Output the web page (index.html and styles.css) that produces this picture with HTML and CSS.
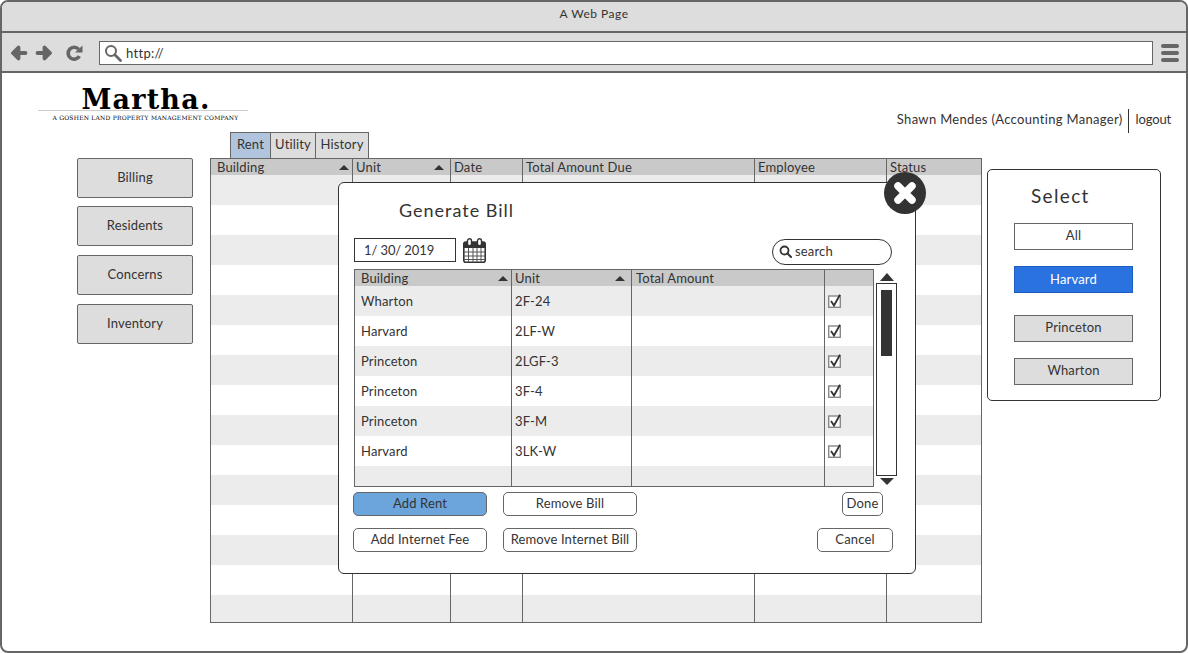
FILE: index.html
```html
<!DOCTYPE html>
<html lang="en">
<head>
<meta charset="utf-8">
<title>A Web Page</title>
<link rel="stylesheet" href="styles.css">
</head>
<body>
<div class="window">
  <div class="titlebar">A Web Page</div>
  <div class="toolbar">
    <svg class="nav-icon" width="18" height="16" viewBox="0 0 18 16"><path d="M8.500 2.500 3 8l5.500 5.500zM4 8H15.500" fill="#666" stroke="#666" stroke-width="3.800" stroke-linecap="round" stroke-linejoin="round"/></svg>
    <svg class="nav-icon" width="18" height="16" viewBox="0 0 18 16"><path d="M9.500 2.500 15 8l-5.500 5.500zM14 8H2.500" fill="#666" stroke="#666" stroke-width="3.800" stroke-linecap="round" stroke-linejoin="round"/></svg>
    <svg class="nav-icon nav-reload" width="17" height="17" viewBox="0 0 17 17"><path d="M13.400 11.200A6 6 0 1 1 12.600 4.200" fill="none" stroke="#666" stroke-width="3.600"/><path d="M9 7.500 16.500 7.500 16.500 0.500Z" fill="#666"/></svg>
    <div class="urlbar">
      <svg width="18" height="18" viewBox="0 0 18 18"><circle cx="7" cy="7" r="5" fill="none" stroke="#666" stroke-width="2"/><path d="M10.800 10.800 16.500 16.500" stroke="#666" stroke-width="2.800" stroke-linecap="round"/></svg>
      <span>http://</span>
    </div>
    <div class="hamburger"><i></i><i></i><i></i></div>
  </div>

  <div class="header">
    <div class="logo">
      <div class="logo-name">Martha.</div>
      <div class="logo-tag">A GOSHEN LAND PROPERTY MANAGEMENT COMPANY</div>
    </div>
    <div class="user">
      <span class="user-name">Shawn Mendes (Accounting Manager)</span>
      <span class="logout">logout</span>
    </div>
  </div>

  <div class="main">
    <nav class="sidebar">
      <div class="nav-btn">Billing</div>
      <div class="nav-btn nav-first">Residents</div>
      <div class="nav-btn">Concerns</div>
      <div class="nav-btn">Inventory</div>
    </nav>

    <div class="center">
      <div class="tabs">
        <div class="tab tab-active">Rent</div>
        <div class="tab tab-utility">Utility</div>
        <div class="tab tab-history">History</div>
      </div>
      <div class="grid-wrap">
        <table class="grid outer">
          <colgroup><col class="c141"><col class="c98"><col class="c72"><col class="c232"><col class="c132"><col></colgroup>
          <thead><tr>
            <th><div class="th-in">Building<i class="sort"></i></div></th>
            <th><div class="th-in th-unit">Unit<i class="sort"></i></div></th>
            <th>Date</th><th>Total Amount Due</th><th>Employee</th><th>Status</th>
          </tr></thead>
          <tbody>
            <tr><td></td><td></td><td></td><td></td><td></td><td></td></tr>
            <tr><td></td><td></td><td></td><td></td><td></td><td></td></tr>
            <tr><td></td><td></td><td></td><td></td><td></td><td></td></tr>
            <tr><td></td><td></td><td></td><td></td><td></td><td></td></tr>
            <tr><td></td><td></td><td></td><td></td><td></td><td></td></tr>
            <tr><td></td><td></td><td></td><td></td><td></td><td></td></tr>
            <tr><td></td><td></td><td></td><td></td><td></td><td></td></tr>
            <tr><td></td><td></td><td></td><td></td><td></td><td></td></tr>
            <tr><td></td><td></td><td></td><td></td><td></td><td></td></tr>
            <tr><td></td><td></td><td></td><td></td><td></td><td></td></tr>
            <tr><td></td><td></td><td></td><td></td><td></td><td></td></tr>
            <tr><td></td><td></td><td></td><td></td><td></td><td></td></tr>
            <tr><td></td><td></td><td></td><td></td><td></td><td></td></tr>
            <tr><td></td><td></td><td></td><td></td><td></td><td></td></tr>
            <tr class="row-last"><td></td><td></td><td></td><td></td><td></td><td></td></tr>
          </tbody>
        </table>
      </div>
    </div>

    <aside class="panel">
      <div class="panel-title">Select</div>
      <div class="pick pick-white">All</div>
      <div class="pick pick-blue">Harvard</div>
      <div class="pick pick-gray pick-gap">Princeton</div>
      <div class="pick pick-gray">Wharton</div>
    </aside>
  </div>

  <div class="modal">
    <div class="modal-title">Generate Bill</div>
    <div class="modal-filter">
      <div class="date-box">1/ 30/ 2019</div>
      <svg class="cal" width="23" height="25" viewBox="0 0 23 25">
        <rect x="0.800" y="4" width="21.400" height="20.200" rx="2" fill="#fff" stroke="#333" stroke-width="1.600"/>
        <path d="M1 4h21v6H1z" fill="#333"/>
        <path d="M1 14h21M1 18h21M1 21.500h21M5.500 10v14M10 10v14M14 10v14M18 10v14" stroke="#555" stroke-width="1" fill="none"/>
        <rect x="4.500" y="0.800" width="4" height="7" rx="2" fill="#fff" stroke="#333" stroke-width="1.400"/>
        <rect x="14.500" y="0.800" width="4" height="7" rx="2" fill="#fff" stroke="#333" stroke-width="1.400"/>
      </svg>
      <div class="search">
        <svg width="13" height="13" viewBox="0 0 13 13"><circle cx="5.500" cy="5.500" r="4" fill="none" stroke="#333" stroke-width="1.800"/><path d="M8.500 8.500 12 12" stroke="#333" stroke-width="2" stroke-linecap="round"/></svg>
        <span>search</span>
      </div>
    </div>
    <div class="modal-list">
      <div class="grid-wrap inner-wrap">
        <table class="grid inner">
          <colgroup><col class="c156"><col class="c120"><col class="c193"><col></colgroup>
          <thead><tr>
            <th><div class="th-in">Building<i class="sort"></i></div></th>
            <th><div class="th-in th-unit">Unit<i class="sort"></i></div></th>
            <th class="th-total">Total Amount</th><th></th>
          </tr></thead>
          <tbody>
            <tr><td class="first">Wharton</td><td>2F-24</td><td></td><td class="chk"><svg class="check" width="14" height="14" viewBox="0 0 14 14"><use href="#tick"/></svg></td></tr>
            <tr><td class="first">Harvard</td><td>2LF-W</td><td></td><td class="chk"><svg class="check" width="14" height="14" viewBox="0 0 14 14"><use href="#tick"/></svg></td></tr>
            <tr><td class="first">Princeton</td><td>2LGF-3</td><td></td><td class="chk"><svg class="check" width="14" height="14" viewBox="0 0 14 14"><use href="#tick"/></svg></td></tr>
            <tr><td class="first">Princeton</td><td>3F-4</td><td></td><td class="chk"><svg class="check" width="14" height="14" viewBox="0 0 14 14"><use href="#tick"/></svg></td></tr>
            <tr><td class="first">Princeton</td><td>3F-M</td><td></td><td class="chk"><svg class="check" width="14" height="14" viewBox="0 0 14 14"><use href="#tick"/></svg></td></tr>
            <tr><td class="first">Harvard</td><td>3LK-W</td><td></td><td class="chk"><svg class="check" width="14" height="14" viewBox="0 0 14 14"><use href="#tick"/></svg></td></tr>
            <tr class="row-tail"><td></td><td></td><td></td><td></td></tr>
          </tbody>
        </table>
      </div>
      <div class="scroll">
        <i class="arrow-up"></i>
        <div class="scroll-track"><div class="scroll-thumb"></div></div>
        <i class="arrow-down"></i>
      </div>
    </div>
    <div class="btn-row">
      <div class="btn btn-blue">Add Rent</div>
      <div class="btn">Remove Bill</div>
      <div class="btn btn-done">Done</div>
    </div>
    <div class="btn-row btn-row-2">
      <div class="btn">Add Internet Fee</div>
      <div class="btn">Remove Internet Bill</div>
      <div class="btn btn-cancel">Cancel</div>
    </div>
  </div>

  <svg class="close" width="42" height="42" viewBox="0 0 42 42">
    <circle cx="21" cy="21" r="21" fill="#333"/>
    <path d="M14 14 28 28M28 14 14 28" stroke="#fff" stroke-width="7.500" stroke-linecap="round"/>
  </svg>

  <svg class="defs" width="0" height="0">
    <defs><g id="tick">
      <rect x="0.700" y="2" width="11.600" height="11.300" fill="#fff" stroke="#888" stroke-width="1.400"/>
      <path d="M3 7 6 11.500 12 0.800" fill="none" stroke="#333" stroke-width="1.800"/>
    </g></defs>
  </svg>
</div>
</body>
</html>
```
FILE: styles.css
```css
* { box-sizing: border-box; }
html, body { margin: 0; padding: 0; }
body {
  width: 1188px;
  height: 653px;
  overflow: hidden;
  font-family: "Lato", "Liberation Sans", sans-serif;
  font-size: 13px;
  letter-spacing: 0.15px;
  color: #333;
  background: #fff;
}
.window {
  position: relative;
  width: 1188px;
  height: 653px;
  border: 2px solid #666;
  border-radius: 8px;
  overflow: hidden;
  background: #fff;
}
.titlebar {
  height: 31px;
  background: #ddd;
  border-bottom: 2px solid #666;
  text-align: center;
  font-size: 12px;
  letter-spacing: 0.5px;
  line-height: 24px;
}
.toolbar {
  height: 40px;
  background: #ddd;
  border-bottom: 2px solid #666;
  display: flex;
  align-items: center;
  padding-left: 8px;
  padding-top: 2px;
}
.nav-icon { margin-right: 0; flex: none; }
.nav-icon + .nav-icon { margin-left: 7px; }
.nav-icon.nav-reload { margin-left: 13px; }
.urlbar {
  margin-left: 16px;
  width: 1054px;
  height: 24px;
  background: #fff;
  border: 1px solid #666;
  display: flex;
  align-items: center;
  gap: 4px;
  padding-left: 4px;
  font-size: 13px;
  letter-spacing: 0.3px;
}
.hamburger {
  margin-left: 8px;
  width: 18px;
  display: flex;
  flex-direction: column;
  gap: 3px;
}
.hamburger i { display: block; height: 4px; border-radius: 2px; background: #666; }

.header {
  height: 59px;
  display: flex;
  justify-content: space-between;
  align-items: flex-end;
}
.logo {
  margin-left: 36px;
  width: 210px;
  height: 46px;
  text-align: center;
  font-family: "DejaVu Serif", "Liberation Serif", serif;
  color: #000;
  letter-spacing: 0;
  align-self: flex-start;
  margin-top: 10px;
}
.logo-name {
  font-size: 27px;
  font-weight: bold;
  line-height: 33px;
  letter-spacing: 1.2px;
  padding-left: 6px;
  border-bottom: 1px solid #ccc;
  height: 28px;
}
.logo-tag { font-size: 6px; line-height: 13px; letter-spacing: 0.22px; padding-left: 5px; }
.user { display: flex; align-items: stretch; margin-right: 15px; height: 24px; margin-bottom: -1px; }
.user-name { padding-right: 5px; border-right: 1px solid #333; line-height: 20px; letter-spacing: 0.32px; }
.logout { padding-left: 7px; line-height: 20px; letter-spacing: -0.15px; }

.main { display: flex; align-items: flex-start; padding-left: 75px; }
.sidebar { width: 116px; margin-top: 26px; margin-right: 17px; }
.nav-btn {
  height: 40px;
  background: #ddd;
  border: 1px solid #666;
  border-radius: 2px;
  display: flex;
  align-items: center;
  justify-content: center;
  padding-bottom: 2px;
  margin-top: 9px;
}
.nav-btn:first-child { margin-top: 0; }
.nav-btn.nav-first { margin-top: 8px; }

.center { width: 772px; }
.tabs { display: flex; height: 26px; margin-left: 20px; }
.tab {
  background: #ddd;
  border: 1px solid #666;
  border-bottom: 0;
  border-left: 0;
  display: flex;
  align-items: center;
  justify-content: center;
  padding-bottom: 4px;
}
.tab-active { width: 41px; background: #b0c4de; border-left: 1px solid #666; }
.tab-utility { width: 45px; }
.tab-history { width: 53px; }

.grid-wrap { border: 1px solid #666; height: 465px; overflow: hidden; }
.grid { border-spacing: 0; table-layout: fixed; width: 100%; }
.c141 { width: 141px; }
.c98 { width: 98px; }
.c72 { width: 72px; }
.c232 { width: 232px; }
.c132 { width: 132px; }
.c156 { width: 156px; }
.c120 { width: 120px; }
.c193 { width: 193px; }
.grid th {
  height: 16px;
  padding: 0 0 0 3px;
  background: #c9c9c9;
  font-weight: normal;
  text-align: left;
  line-height: 16px;
  border-left: 1px solid #666;
  overflow: hidden;
}
.grid th.th-total { padding-left: 4px; }
.grid td { height: 30px; padding: 0 0 0 3px; border-left: 1px solid #666; }
.grid th:first-child { border-left: 0; padding-left: 6px; }
.grid td:first-child { border-left: 0; }
.grid tbody tr:nth-child(odd) td { background: #ececec; }
.row-last td { height: 27px !important; }
.row-tail td { height: 20px !important; }
.th-in { display: flex; justify-content: space-between; align-items: center; padding-right: 3px; }
.th-in.th-unit { padding-right: 6px; }
.sort {
  width: 0; height: 0;
  border-left: 5px solid transparent;
  border-right: 5px solid transparent;
  border-bottom: 5px solid #333;
}

.panel {
  margin-left: 5px;
  margin-top: 37px;
  width: 174px;
  height: 232px;
  border: 1px solid #333;
  border-radius: 5px;
  background: #fff;
  padding-left: 26px;
}
.panel-title { height: 53px; padding: 13px 0 0 17px; font-size: 19px; line-height: 26px; letter-spacing: 1.35px; }
.pick {
  width: 119px;
  height: 27px;
  display: flex;
  align-items: center;
  justify-content: center;
  border: 1px solid #666;
  padding-bottom: 3px;
  margin-bottom: 16px;
}
.pick-white { background: #fff; }
.pick-blue { background: #2a72e0; border-color: #1d5fc0; color: #fff; padding-bottom: 2px; }
.pick-gray { background: #ddd; }
.pick-blue { margin-bottom: 22px; }

.modal {
  position: absolute;
  left: 336px;
  top: 180px;
  width: 578px;
  height: 392px;
  background: #fff;
  border: 1px solid #333;
  border-radius: 6px;
  padding-left: 14px;
}
.modal-title { height: 55px; padding: 14px 0 0 46px; font-size: 18px; line-height: 26px; letter-spacing: 1px; }
.modal-filter { display: flex; align-items: flex-start; height: 27px; margin-left: 1px; margin-right: 23px; }
.date-box {
  width: 102px;
  height: 24px;
  border: 1px solid #333;
  padding-left: 9px;
  line-height: 22px;
  letter-spacing: -0.1px;
}
.cal { margin-left: 7px; }
.search {
  margin-left: auto;
  margin-top: 1px;
  width: 120px;
  height: 26px;
  border: 1px solid #333;
  border-radius: 13px;
  display: flex;
  align-items: center;
  gap: 3px;
  padding-left: 6px;
  padding-bottom: 2px;
}
.modal-list { display: flex; margin-top: 4px; margin-left: 1px; height: 218px; }
.inner-wrap { width: 520px; height: 218px; }
.grid .first { padding-left: 6px; }
.chk { text-align: left; }
.grid td.chk { padding-left: 3px; }
.check { display: block; }
.scroll {
  width: 21px;
  margin-left: 2px;
  margin-top: 4px;
  display: flex;
  flex-direction: column;
  align-items: center;
}
.arrow-up, .arrow-down {
  width: 0; height: 0;
  border-left: 7px solid transparent;
  border-right: 7px solid transparent;
}
.arrow-up { border-bottom: 8px solid #333; }
.arrow-down { border-top: 7px solid #333; margin-top: 2px; }
.scroll-track {
  width: 21px;
  height: 193px;
  margin-top: 2px;
  border: 1px solid #333;
  background: #fff;
  padding: 6px 4px 0;
}
.scroll-thumb { width: 11px; height: 66px; background: #333; }
.btn-row { display: flex; gap: 16px; margin-top: 5px; }
.btn-row-2 { margin-top: 12px; }
.btn {
  width: 134px;
  height: 24px;
  border: 1px solid #666;
  border-radius: 5px;
  background: #fff;
  display: flex;
  align-items: center;
  justify-content: center;
  padding-bottom: 2px;
  white-space: nowrap;
}
.btn-blue { background: #6ca4dc; }
.btn.btn-done { width: 41px; margin-left: auto; margin-right: 32px; }
.btn.btn-cancel { width: 76px; margin-left: auto; margin-right: 22px; }

.close { position: absolute; left: 882px; top: 170px; }
.defs { position: absolute; }
```
